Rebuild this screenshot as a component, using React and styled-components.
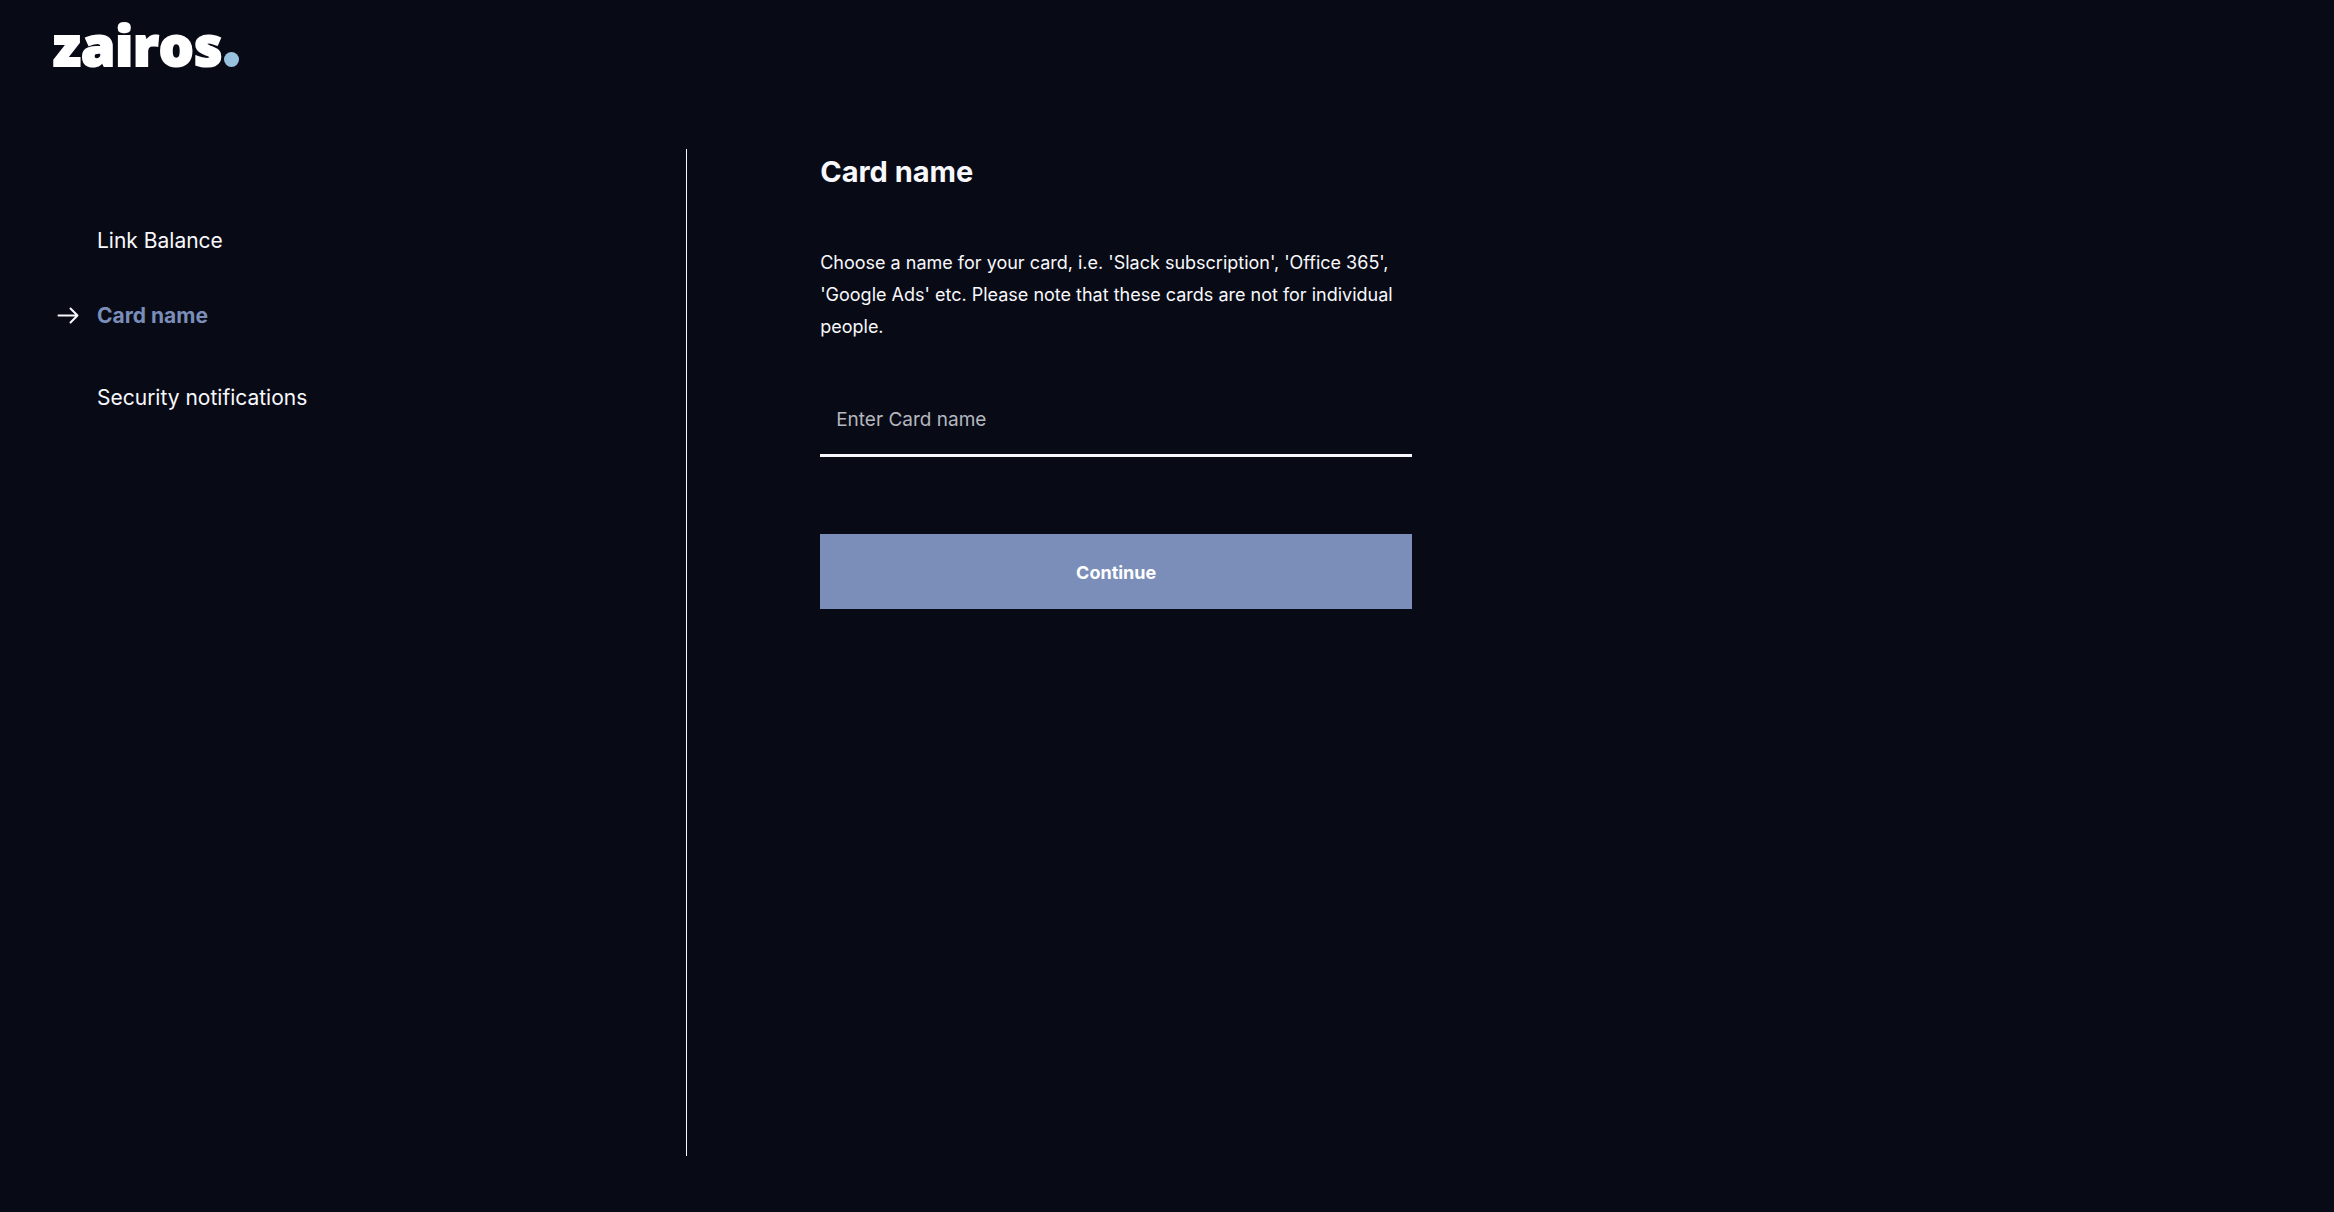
import styled, { createGlobalStyle } from "styled-components";

const GlobalStyle = createGlobalStyle`
    * {
        box-sizing: border-box;
    }
    body {
        margin: 0;
        background-color: #080b16;
        color: #f8f8fc;
        font-family: Inter, "Liberation Sans", sans-serif;
    }
`
const Page = styled.div`
    display: flex;
    flex-direction: column;
    min-height: 100vh;
    padding-bottom: 56px;
`
const Header = styled.header`
    display: flex;
    height: 149px;
    padding: 7px 53px;
`
const Logo = styled.a`
    display: flex;
    align-items: flex-end;
    height: 76px;
    color: white;
    font-family: "Open Sans", sans-serif;
    font-size: 55px;
    font-weight: 800;
    line-height: 76px;
    text-decoration: none;
    -webkit-text-stroke: 2px white;
`
const LogoDot = styled.span`
    width: 15px;
    height: 15px;
    margin: 0 0 16px 2px;
    border-radius: 50%;
    background-color: #98c1dd;
`
const Main = styled.main`
    display: flex;
    flex: 1;
`
const Sidebar = styled.nav`
    flex: 0 0 29.4%;
    padding: 78px 56px 0;
`
const Steps = styled.ol`
    margin: 0;
    padding: 0;
    list-style: none;
`
const Step = styled.li`
    display: flex;
    align-items: center;
    height: 28px;
    margin-bottom: ${props => props.$active ? "54px" : "47px"};
`
const StepIcon = styled.span`
    display: flex;
    flex: 0 0 41px;
`
const StepLink = styled.a`
    color: ${props => props.$active ? "#7b8eb9" : "inherit"};
    font-size: 21px;
    font-weight: ${props => props.$active ? 700 : 400};
    line-height: 28px;
    text-decoration: none;
`
const Content = styled.section`
    flex: 1;
    padding: 0 56px 0 133px;
    border-left: 1px solid #f8f8fc;
`
const Form = styled.form`
    max-width: 592px;
`
const Title = styled.h1`
    margin: 0 0 52px;
    font-size: 29px;
    font-weight: 700;
    line-height: 46px;
`
const Desc = styled.p`
    margin: 0 0 38px;
    font-size: 18px;
    line-height: 32px;
`
const Input = styled.input`
    display: block;
    width: 100%;
    height: 76px;
    padding: 4px 16px 0;
    border: none;
    border-bottom: 3px solid #f8f8fc;
    border-radius: 0;
    outline: none;
    background: transparent;
    color: inherit;
    font-family: inherit;
    font-size: 19px;
    &::placeholder {
        color: #b5b6be;
        opacity: 1;
    }
`
const Button = styled.button`
    display: block;
    width: 100%;
    height: 75px;
    margin-top: 77px;
    padding: 2px 16px 0;
    border: none;
    background-color: #7b8eb9;
    color: white;
    font-family: inherit;
    font-size: 18px;
    font-weight: 700;
    cursor: pointer;
`

const steps = ["Link Balance", "Card name", "Security notifications"];
const current = "Card name";

const Arrow = () => (
  <svg width="24" height="18" viewBox="0 0 24 18" fill="none" stroke="#f8f8fc" strokeWidth="2" strokeLinecap="round" strokeLinejoin="round" aria-hidden="true">
    <path d="M2.5 8.5H21.5M14.5 1.5L21.5 8.5L14.5 15.5" />
  </svg>
)

const App = () => {
  return (
    <Page>
      <GlobalStyle />
      <Header>
        <Logo href="#">zairos<LogoDot /></Logo>
      </Header>
      <Main>
        <Sidebar>
          <Steps>
            {steps.map((step) => (
              <Step key={step} $active={step === current}>
                <StepIcon>{step === current && <Arrow />}</StepIcon>
                <StepLink href="#" $active={step === current}>{step}</StepLink>
              </Step>
            ))}
          </Steps>
        </Sidebar>
        <Content>
          <Form onSubmit={(e) => e.preventDefault()}>
            <Title>Card name</Title>
            <Desc>
              Choose a name for your card, i.e. 'Slack subscription', 'Office 365', 'Google Ads' etc. Please note that these cards are not for individual people.
            </Desc>
            <Input type="text" aria-label="Card name" placeholder="Enter Card name" />
            <Button type="submit">Continue</Button>
          </Form>
        </Content>
      </Main>
    </Page>
  )
}

export default App
